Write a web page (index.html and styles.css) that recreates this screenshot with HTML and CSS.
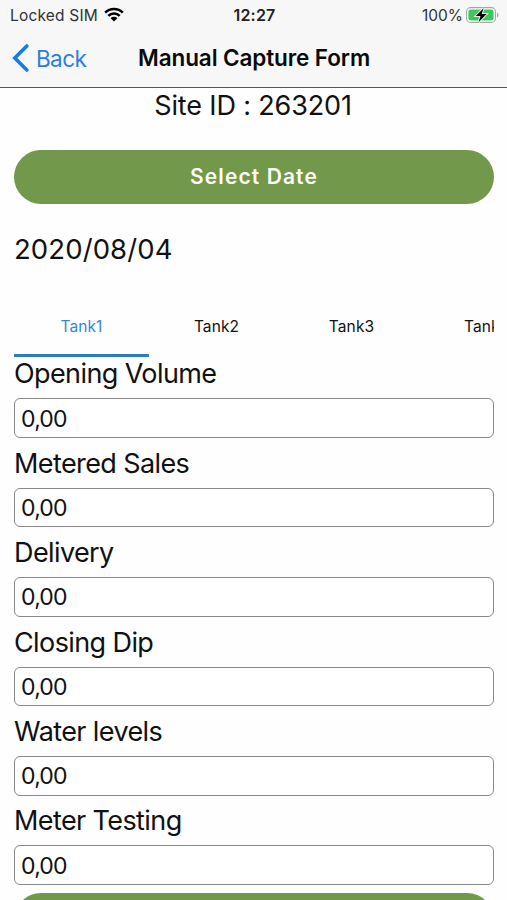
FILE: index.html
```html
<!DOCTYPE html>
<html lang="en">
<head>
    <meta charset="UTF-8">
    <meta name="viewport" content="width=device-width, initial-scale=1.0">
    <title>Manual Capture Form</title>
    <link rel="stylesheet" href="styles.css">
</head>
<body>
    <div id="main">
        <header class="top">
            <div class="status">
                <div class="carrier">
                    <span class="sim">Locked SIM</span>
                    <svg class="wifi" width="20" height="15" viewBox="0 0 20 15">
                        <path d="M1.2 5.6a12.6 12.6 0 0 1 17.6 0M4.3 8.8a8.1 8.1 0 0 1 11.4 0" fill="none" stroke="#000" stroke-width="2.6"/>
                        <path d="M6.6 11.2a4.8 4.8 0 0 1 6.8 0L10 14.6z"/>
                    </svg>
                </div>
                <span class="clock">12:27</span>
                <div class="power">
                    <span class="percent">100%</span>
                    <svg class="battery" width="33" height="16" viewBox="0 0 33 16">
                        <rect x=".6" y=".6" width="28.8" height="14.8" rx="4" fill="#fff" stroke="#a3a8a4" stroke-width="1.1"/>
                        <rect x="2.4" y="2.4" width="25.2" height="11.2" rx="2.4" fill="#3fc65f"/>
                        <path d="M31 5.5v5q1.5-.8 1.5-2.5T31 5.5z" fill="#a3a8a4"/>
                        <path d="M17.5 1.2 9.8 9h4.7l-1.8 6L20.6 7h-4.9z" fill="#000" stroke="#dff5e3" stroke-width="2" paint-order="stroke"/>
                    </svg>
                </div>
            </div>
            <nav class="nav">
                <a class="back">
                    <svg width="17" height="28" viewBox="0 0 17 28">
                        <path d="M14.8 2 2.8 14l12 12" fill="none" stroke="#167be5" stroke-width="3.6" stroke-linecap="round" stroke-linejoin="miter"/>
                    </svg>
                    <span>Back</span>
                </a>
                <h1 class="title">Manual Capture Form</h1>
            </nav>
        </header>

        <div class="content">
            <div class="site">Site ID : 263201</div>
            <button class="btn">Select Date</button>
            <div class="date">2020/08/04</div>

            <div class="tabs">
                <div class="tab active">Tank1</div>
                <div class="tab">Tank2</div>
                <div class="tab">Tank3</div>
                <div class="tab">Tank4</div>
            </div>

            <div class="form">
                <label class="field"><span>Opening Volume</span><input type="text" value="0,00"></label>
                <label class="field"><span>Metered Sales</span><input type="text" value="0,00"></label>
                <label class="field"><span>Delivery</span><input type="text" value="0,00"></label>
                <label class="field"><span>Closing Dip</span><input type="text" value="0,00"></label>
                <label class="field"><span>Water levels</span><input type="text" value="0,00"></label>
                <label class="field"><span>Meter Testing</span><input type="text" value="0,00"></label>
            </div>
            <button class="btn submit"></button>
        </div>
    </div>
</body>
</html>
```
FILE: styles.css
```css
*{
    box-sizing: border-box;
}
body{
    margin: 0;
    background: #fefefe;
    color: #111;
    font-family: Inter, "Liberation Sans", sans-serif;
}
#main{
    height: 900px;
    overflow: hidden;
    display: flex;
    flex-direction: column;
}

/* status bar + navigation */
.top{
    flex: none;
    height: 88px;
    background: #f7f7f7;
    border-bottom: 1.5px solid #555;
}
.status{
    display: grid;
    grid-template-columns: 1fr auto 1fr;
    align-items: center;
    height: 30px;
    padding: 0 8px 0 10px;
    font-size: 15.5px;
    color: #333;
}
.carrier, .power{
    display: flex;
    align-items: center;
    gap: 6px;
}
.sim{
    letter-spacing: 0.2px;
}
.wifi{
    margin-bottom: 1px;
}
.power{
    justify-content: flex-end;
    gap: 3px;
}
.battery{
    margin-bottom: 1px;
}
.clock{
    font-size: 16px;
    letter-spacing: 0.2px;
    font-weight: 600;
    color: #222;
}
.nav{
    display: grid;
    grid-template-columns: 126px 1fr;
    align-items: center;
    height: 56px;
    padding-left: 12px;
}
.back{
    display: flex;
    align-items: center;
    gap: 7px;
    font-size: 22.5px;
    letter-spacing: -0.6px;
    color: #2a80dc;
}
.title{
    margin: 0;
    font-size: 22.5px;
    font-weight: 600;
    letter-spacing: -0.1px;
    line-height: 28px;
    padding-bottom: 1px;
    color: #0a0a0a;
    white-space: nowrap;
}

.content{
    padding: 0 13px 0 14px;
}
.site{
    height: 61.5px;
    padding-right: 2px;
    line-height: 36px;
    font-size: 27px;
    letter-spacing: -0.15px;
    text-align: center;
}
.btn{
    display: block;
    width: 100%;
    height: 54px;
    padding: 0;
    border: none;
    border-radius: 27px;
    background: #72984b;
    color: #fbfff5;
    font-family: inherit;
    font-size: 21px;
    font-weight: 600;
    letter-spacing: 1.1px;
}
.submit{
    margin-top: -1px;
}
.date{
    height: 93px;
    line-height: 90px;
    font-size: 27.5px;
    letter-spacing: 0.1px;
}

.tabs{
    display: flex;
    height: 60.8px;
    overflow: hidden;
}
.tab{
    flex: 0 0 135px;
    height: 60px;
    line-height: 60px;
    font-size: 15.5px;
    letter-spacing: 0.1px;
    text-align: center;
    border-bottom: 3px solid transparent;
}
.active{
    color: #3389ce;
    border-bottom-color: #2c7dbb;
}

.field{
    display: flex;
    flex-direction: column;
    height: 89.45px;
}
.field span{
    height: 41px;
    line-height: 34px;
    font-size: 27px;
    letter-spacing: -0.6px;
}
.field input{
    height: 39.5px;
    padding: 1px 6px 0;
    border: 1.5px solid #888;
    border-radius: 6px;
    background: #fff;
    color: #111;
    font-family: inherit;
    font-size: 23px;
    letter-spacing: -0.8px;
}
```
